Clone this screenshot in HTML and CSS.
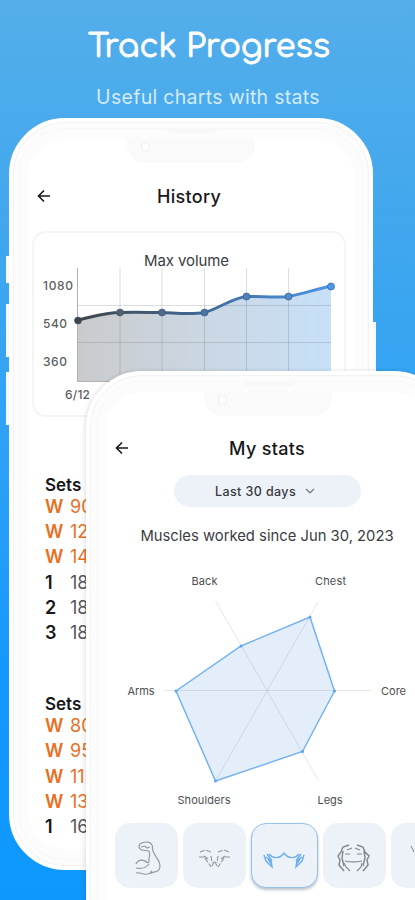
FILE: index.html
```html
<!DOCTYPE html>
<html lang="en">
<head>
    <meta charset="UTF-8">
    <meta name="viewport" content="width=device-width, initial-scale=1.0">
    <title>Track Progress</title>
    <link rel="stylesheet" href="styles.css">
</head>
<body>

<div class="promo">
    <h1>Track Progress</h1>
    <p class="subtitle">Useful charts with stats</p>

    <!-- History phone -->
    <div class="phone phone-back">
        <span class="side-btn btn-silent"></span>
        <span class="side-btn btn-up"></span>
        <span class="side-btn btn-down"></span>
        <span class="side-btn btn-power"></span>
        <span class="speaker"></span>
        <div class="screen">
            <div class="notch"><span class="camera"></span></div>
            <div class="top-bar">
                <svg class="back-arrow" viewBox="0 0 14 14"><path d="M13 7H1.5M7 1.5L1.5 7L7 12.5"/></svg>
                <h2>History</h2>
            </div>

            <div class="chart-card">
                <svg class="volume-chart" width="314" height="186" viewBox="32 231 314 186">
                    <defs>
                        <linearGradient id="lineColor" gradientUnits="userSpaceOnUse" x1="78" y1="0" x2="331" y2="0">
                            <stop offset="0" stop-color="#404348"/>
                            <stop offset="0.5" stop-color="#416c98"/>
                            <stop offset="1" stop-color="#4c94e6"/>
                        </linearGradient>
                        <linearGradient id="areaColor" gradientUnits="userSpaceOnUse" x1="78" y1="0" x2="331" y2="0">
                            <stop offset="0" stop-color="#cacbcc"/>
                            <stop offset="0.5" stop-color="#cbd7e3"/>
                            <stop offset="1" stop-color="#c7e0f8"/>
                        </linearGradient>
                    </defs>
                    <text class="chart-title" x="144" y="266" textLength="85">Max volume</text>
                    <path fill="url(#areaColor)" d="M78 320C92 317 106 312.500 120 312.500C134 312 148 312.500 162 312.500C176 313 190 315 204.500 312.500C218 309 232 298 246.500 296.500C260 296 274 298 288.500 296.500C302 294 317 289 331 286V381H78Z"/>
                    <path class="grid" d="M120 268V381M162 268V381M204.500 268V381M246.500 268V381M288.500 268V381M78 305.500H331M78 342.500H331"/>
                    <path class="axis" d="M77.500 268V381.500H331"/>
                    <path class="line" d="M78 320C92 317 106 312.500 120 312.500C134 312 148 312.500 162 312.500C176 313 190 315 204.500 312.500C218 309 232 298 246.500 296.500C260 296 274 298 288.500 296.500C302 294 317 289 331 286"/>
                    <g class="dots">
                        <circle cx="78" cy="320.500" r="3.500" fill="#404348"/>
                        <circle cx="120" cy="312.500" r="3.500" fill="#555f69"/>
                        <circle cx="162" cy="312.500" r="3.500" fill="#4e6a86"/>
                        <circle cx="204.500" cy="312.500" r="3.500" fill="#4b76a4"/>
                        <circle cx="246.500" cy="296.500" r="3.500" fill="#4e82bc"/>
                        <circle cx="288.500" cy="296.500" r="3.500" fill="#508dd3"/>
                        <circle cx="331" cy="286.500" r="3.500" fill="#4c98ee"/>
                    </g>
                    <g class="tick">
                        <text x="43" y="290" textLength="30">1080</text>
                        <text x="43" y="328" textLength="24">540</text>
                        <text x="43" y="366" textLength="24">360</text>
                        <text x="65" y="399" textLength="25">6/12</text>
                    </g>
                </svg>
            </div>

            <div class="sets">
                <h3>Sets</h3>
                <div class="set warmup"><b>W</b><span>90</span></div>
                <div class="set warmup"><b>W</b><span>125</span></div>
                <div class="set warmup"><b>W</b><span>145</span></div>
                <div class="set"><b>1</b><span>185</span></div>
                <div class="set"><b>2</b><span>185</span></div>
                <div class="set"><b>3</b><span>185</span></div>
            </div>
            <div class="sets">
                <h3>Sets</h3>
                <div class="set warmup"><b>W</b><span>80</span></div>
                <div class="set warmup"><b>W</b><span>95</span></div>
                <div class="set warmup"><b>W</b><span>115</span></div>
                <div class="set warmup"><b>W</b><span>135</span></div>
                <div class="set"><b>1</b><span>165</span></div>
            </div>
        </div>
    </div>

    <!-- My stats phone -->
    <div class="phone phone-front">
        <span class="speaker"></span>
        <div class="screen">
            <div class="notch"><span class="camera"></span></div>
            <div class="top-bar">
                <svg class="back-arrow" viewBox="0 0 14 14"><path d="M13 7H1.5M7 1.5L1.5 7L7 12.5"/></svg>
                <h2>My stats</h2>
            </div>
            <div class="period">
                <span>Last 30 days</span>
                <svg width="10" height="6" viewBox="0 0 10 6"><path d="M1 1L5 4.800L9 1"/></svg>
            </div>
            <p class="since">Muscles worked since Jun 30, 2023</p>

            <svg class="radar" width="315" height="250" viewBox="100 565 315 250">
                <polygon class="radar-area" points="310,617 334.500,691 302.500,751.500 215.500,781 176,691 241,646"/>
                <path class="radar-axis" d="M164 690.500H371M215.500 601L318.500 780.500M318.500 601L215.500 781"/>
                <polygon class="radar-line" points="310,617 334.500,691 302.500,751.500 215.500,781 176,691 241,646"/>
                <g class="radar-dots">
                    <circle cx="310" cy="617" r="1.500"/>
                    <circle cx="334.500" cy="691" r="1.500"/>
                    <circle cx="302.500" cy="751.500" r="1.500"/>
                    <circle cx="215.500" cy="781" r="1.500"/>
                    <circle cx="176" cy="691" r="1.500"/>
                    <circle cx="241" cy="646" r="1.500"/>
                </g>
                <g class="radar-label">
                    <text x="191.500" y="585" textLength="26">Back</text>
                    <text x="315" y="585" textLength="31">Chest</text>
                    <text x="127.500" y="694.500" textLength="27">Arms</text>
                    <text x="381" y="694.500" textLength="25">Core</text>
                    <text x="177.500" y="804" textLength="53">Shoulders</text>
                    <text x="317.500" y="804" textLength="25">Legs</text>
                </g>
            </svg>

            <!-- Muscle picker -->
            <div class="muscles">
                <div class="muscle">
                    <svg viewBox="0 0 64 64"><path d="M34 28L27 27C23 26 23 21 27 20C31 18 36 19 37 22C38 24 37 26 38 28C40 34 45 37 45 43C45 47 42 49 39 49C36 50 33 52 29 51C26 51 24 49 21 50M26 24L30 23L32 25L35 24M34 28C36 32 33 35 34 40M21 41C23 36 29 36 33 40M21 45C26 46 31 45 34 41M35 50L37 48"/></svg>
                </div>
                <div class="muscle">
                    <svg viewBox="0 0 64 64"><path stroke-dasharray="5 1.500" d="M17 29L22 27L28 29M35 29L41 27L46 29M16 34L21 34L24 38L28 44M47 34L42 34L39 38L35 44M21 33L25 36M42 33L38 36M28 33L29 40M35 33L34 40M29 43L31.500 38L34 43"/></svg>
                </div>
                <div class="muscle selected">
                    <svg viewBox="0 0 64 64"><path d="M17 30C20 34 27 36 32 29C37 36 44 34 47 30"/><path d="M12 31L14 37L20 43L19 37L14 33M52 31L50 37L44 43L45 37L50 33M15 30L20 37M49 30L44 37M16 35L20 41M48 35L44 41"/></svg>
                </div>
                <div class="muscle abs">
                    <svg viewBox="0 0 64 64"><path stroke-width="1.500" d="M26 22L20 24L18 29L15 33L17 37L16 42L21 48M34 22L40 24L42 29L46 33L44 37L45 42L40 48M20 28L19 35L21 43M41 28L42 35L40 43"/><path d="M22 31H27M34 31H39M22 38C27 39 34 39 39 38M21 40L23 44L27 48M39 40L38 44L34 48M24 27L29 25M37 27L32 25"/></svg>
                </div>
                <div class="muscle">
                    <svg viewBox="0 0 64 64"><path d="M20 23L23 29M44 23L41 29M28 31L30 45M36 31L34 45"/></svg>
                </div>
            </div>
        </div>
    </div>
</div>

</body>
</html>
```
FILE: styles.css
```css
* {
    box-sizing: border-box;
}
body {
    font-family: Inter, "Liberation Sans", sans-serif;
    margin: 0;
    color: #17181a;
}
h1, h2, h3, p {
    margin: 0;
    font-weight: normal;
}
.promo {
    position: relative;
    height: 900px;
    overflow: hidden;
    background: linear-gradient(#54aeea 0%, #43a8ed 22%, #2fa2f5 48%, #1498fd 75%, #0e98fe 100%);
}
h1 {
    padding: 26px 0 0 3px;
    text-align: center;
    font-family: Comfortaa, Quicksand, Lato, sans-serif;
    font-size: 32px;
    line-height: 42px;
    color: #fff;
    -webkit-text-stroke: 0.8px #fff;
}
.subtitle {
    padding: 16px 0 0 1px;
    text-align: center;
    font-size: 19.5px;
    line-height: 26px;
    letter-spacing: 0.3px;
    color: #d3ebfc;
}

/* Phones */
.phone {
    width: 364px;
    height: 752px;
    padding: 17px 15px;
    border-radius: 56px;
    background: #fcfcfc;
    border: 4px solid #fff;
    box-shadow: inset 0 0 0 1px #f3f3f4, inset 0 0 0 6px #fcfcfc, inset 0 0 0 7px #f8f8f9;
}
.phone-back {
    position: relative;
    margin: 8px 0 0 9px;
}
.phone-front {
    position: absolute;
    left: 86px;
    top: 371px;
    box-shadow: inset 0 0 0 1px #f3f3f4, inset 0 0 0 6px #fcfcfc, inset 0 0 0 7px #f8f8f9, -1px 0 4px rgba(0, 0, 0, 0.13);
}
.screen {
    height: 100%;
    border-radius: 38px;
    background: #fff;
}
.side-btn {
    position: absolute;
    width: 3px;
    background: #f8f9fa;
}
.btn-silent {
    left: -7px;
    top: 134px;
    height: 27px;
}
.btn-up {
    left: -7px;
    top: 182px;
    height: 53px;
}
.btn-down {
    left: -7px;
    top: 250px;
    height: 53px;
}
.btn-power {
    right: -7px;
    top: 200px;
    height: 86px;
}
.speaker {
    position: absolute;
    left: 153px;
    top: 6px;
    width: 52px;
    height: 5px;
    border-radius: 0 0 5px 5px;
    background: #f8f8f9;
}
.notch {
    width: 128px;
    height: 24px;
    margin: 0 auto;
    padding: 3px 14px;
    border-radius: 0 0 18px 18px;
    background: #fafafb;
}
.camera {
    display: block;
    width: 9px;
    height: 10px;
    border: 1px solid #f0f0f1;
    border-radius: 4px;
    background: #fdfdfd;
}
.top-bar {
    position: relative;
    display: flex;
    align-items: center;
    justify-content: center;
    height: 30px;
    margin-top: 18px;
    padding-right: 4px;
}
.top-bar h2 {
    font-size: 18px;
    font-weight: 500;
    letter-spacing: 0.3px;
}
.back-arrow {
    position: absolute;
    left: 9px;
    width: 14px;
    height: 14px;
    fill: none;
    stroke: #17181a;
    stroke-width: 1.6;
}
.phone-front .top-bar {
    margin-top: 17px;
    padding-right: 2px;
}
.phone-front .back-arrow {
    left: 10px;
}

/* Max volume chart */
.chart-card {
    width: 314px;
    height: 186px;
    margin: 20px 0 0 4px;
    border-radius: 14px;
    box-shadow: inset 0 0 0 2px #f5f5f6;
}
.volume-chart {
    display: block;
}
.chart-title {
    font-size: 15px;
    fill: #3b3c3f;
}
.grid {
    fill: none;
    stroke: #50545c;
    stroke-opacity: 0.2;
}
.axis {
    fill: none;
    stroke: #aeb0b3;
}
.line {
    fill: none;
    stroke: url(#lineColor);
    stroke-width: 3;
}
.dots circle {
    stroke: #34557a;
    stroke-opacity: 0.65;
}
.tick {
    font-size: 12px;
    font-weight: 500;
    fill: #5c5d60;
}

/* Sets */
.sets {
    width: 120px;
    margin: 59px 0 0 17px;
    font-size: 18px;
}
.sets + .sets {
    margin-top: 50px;
}
.sets h3 {
    font-size: 17px;
    font-weight: 600;
    line-height: 18px;
}
.set {
    display: flex;
    line-height: 25.2px;
    color: #55565a;
}
.set b {
    width: 25px;
    font-weight: 600;
    color: #17181a;
}
.warmup, .warmup b {
    color: #e8701f;
}

/* Stats screen */
.period {
    display: flex;
    align-items: center;
    justify-content: center;
    gap: 9px;
    width: 187px;
    height: 32px;
    margin: 12px 0 0 69px;
    padding-right: 5px;
    border-radius: 16px;
    background: #edf2f9;
    font-size: 12.5px;
    font-weight: 500;
    letter-spacing: 0.4px;
    color: #38393d;
}
.period svg {
    fill: none;
    stroke: #77797e;
    stroke-width: 1.2;
}
.since {
    margin-top: 19px;
    padding-right: 2px;
    text-align: center;
    font-size: 14.8px;
    line-height: 20px;
    white-space: nowrap;
    color: #3b3c3f;
}
.radar {
    display: block;
    margin: 19px 0 0 -5px;
}
.radar-area {
    fill: #e3eefa;
}
.radar-axis {
    fill: none;
    stroke: #6b7480;
    stroke-opacity: 0.18;
}
.radar-line {
    fill: none;
    stroke: #75b2f1;
    stroke-width: 1.5;
}
.radar-dots {
    fill: #5aa4ef;
}
.radar-label {
    font-size: 11px;
    fill: #4d4e51;
}
.muscles {
    display: flex;
    gap: 5px;
    margin: 8px 0 0 10px;
}
.muscle {
    flex: none;
    width: 63px;
    height: 65px;
    border-radius: 15px;
    background: #edf2f8;
}
.muscle svg {
    display: block;
    width: 64px;
    height: 64px;
    fill: none;
    stroke: #929599;
    stroke-width: 1.1;
}
.muscle.selected {
    width: 67px;
    border: 1.5px solid #94c2f1;
    box-shadow: 0 2px 3px rgba(60, 80, 100, 0.35);
}
.selected svg {
    stroke: #6cb0f1;
    stroke-width: 1.4;
}
.abs svg {
    stroke: #85888c;
}
```
